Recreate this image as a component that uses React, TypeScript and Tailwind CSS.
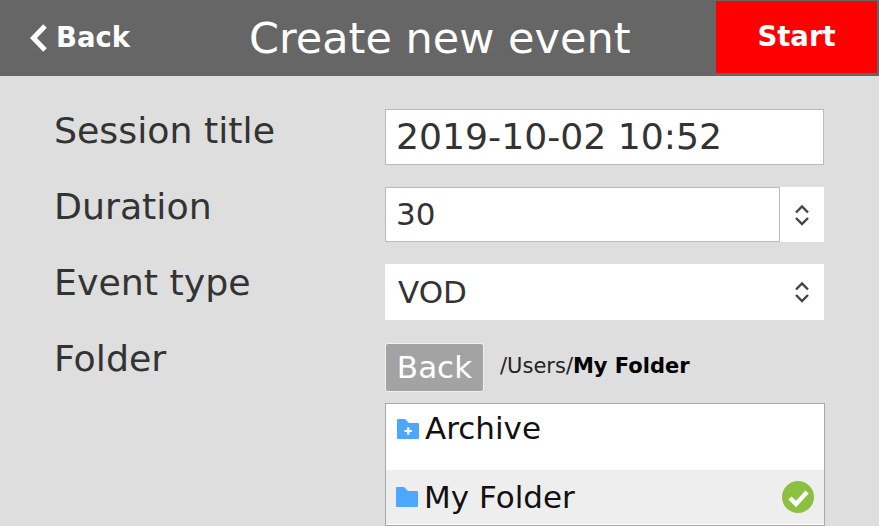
import React from "react";

const Chevrons = () => (
  <svg width="16" height="24" viewBox="0 0 16 24" fill="none" stroke="#444" strokeWidth="2.4">
    <path d="M2 9.5 L8 3.5 L14 9.5" />
    <path d="M2 15 L8 21 L14 15" />
  </svg>
);

const FolderIcon = ({ plus }: { plus?: boolean }) => (
  <svg width="22" height="20" viewBox="0 0 22 20">
    <path d="M0 1 Q0 0 1 0 H8 L12 4 H21 Q22 4 22 5 V19 Q22 20 21 20 H1 Q0 20 0 19 Z" fill="#4da6ff" />
    {plus && <path d="M7.5 12 H15 M11.25 8.25 V15.75" stroke="#fff" strokeWidth="2.2" />}
  </svg>
);

const App = () => {
  return (
    <div className="w-[879px] h-[526px] overflow-hidden bg-[#dedede] font-['DejaVu_Sans',sans-serif]">
      {/* Header */}
      <div className="h-[76px] bg-[#666666] flex items-start text-white">
        <div className="w-[249px] h-[76px] pl-[29px] flex items-center gap-[8px]">
          <svg width="19" height="30" viewBox="0 0 19 30" fill="none" stroke="#fff" strokeWidth="5">
            <path d="M16 3 L4.5 15 L16 27" />
          </svg>
          <span className="text-[27.5px] font-bold leading-none">Back</span>
        </div>
        <div className="w-[467px] h-[76px] flex items-center text-[43px] leading-none">Create new event</div>
        <div className="mt-px w-[161px] h-[72px] bg-[#ff0000] flex items-center justify-center text-[27.5px] font-bold">
          Start
        </div>
      </div>

      {/* Form */}
      <div className="pl-[54px] pt-[33px] flex">
        <div className="w-[331px] flex flex-col text-[36.3px] leading-[43px] text-[#333333]">
          <div className="h-[76px]">Session title</div>
          <div className="h-[76px]">Duration</div>
          <div className="h-[76px]">Event type</div>
          <div>Folder</div>
        </div>
        <div className="w-[440px] flex flex-col">
          <div className="w-[439px] h-[56px] bg-white border border-[#bbbbbb] pl-[10px] flex items-center text-[36.2px] text-[#333333]">
            2019-10-02 10:52
          </div>
          <div className="mt-[22px] w-[439px] h-[55px] flex bg-white">
            <div className="w-[395px] border border-[#bbbbbb] pl-[10px] flex items-center text-[31px] text-[#333333]">
              30
            </div>
            <div className="flex-1 flex items-center justify-center">
              <Chevrons />
            </div>
          </div>
          <div className="mt-[22px] w-[439px] h-[56px] bg-white pl-[13px] pr-[14px] flex items-center justify-between text-[31px] text-[#333333]">
            VOD
            <Chevrons />
          </div>
          <div className="mt-[23px] h-[48px] flex items-center">
            <div className="w-[99px] h-[49px] bg-[#a3a3a3] border border-[#f0f0f0] rounded-[3px] flex items-center justify-center text-[31px] text-white">
              Back
            </div>
            <div className="ml-[16px] text-[21px] text-[#222222]">
              /Users/<b className="text-black">My Folder</b>
            </div>
          </div>
          <div className="mt-[12px] w-[440px] h-[123px] bg-white border border-[#a8a8a8]">
            <div className="h-[66px] pl-[11px] pt-[5px] flex items-start gap-[6px] text-[31px] leading-[38px] text-[#111111]">
              <span className="mt-[10px]">
                <FolderIcon plus />
              </span>
              Archive
            </div>
            <div className="h-[54px] bg-[#eeeeee] pl-[10px] pr-[10px] flex items-center text-[31px] text-[#111111]">
              <FolderIcon />
              <span className="ml-[6px] flex-1 pt-[1px]">My Folder</span>
              <svg width="32" height="32" viewBox="0 0 32 32">
                <circle cx="16" cy="16" r="16" fill="#8cc03e" />
                <path d="M8 17 L14 23 L25 11" fill="none" stroke="#fff" strokeWidth="4.5" />
              </svg>
            </div>
          </div>
        </div>
      </div>
    </div>
  );
};

export default App;
